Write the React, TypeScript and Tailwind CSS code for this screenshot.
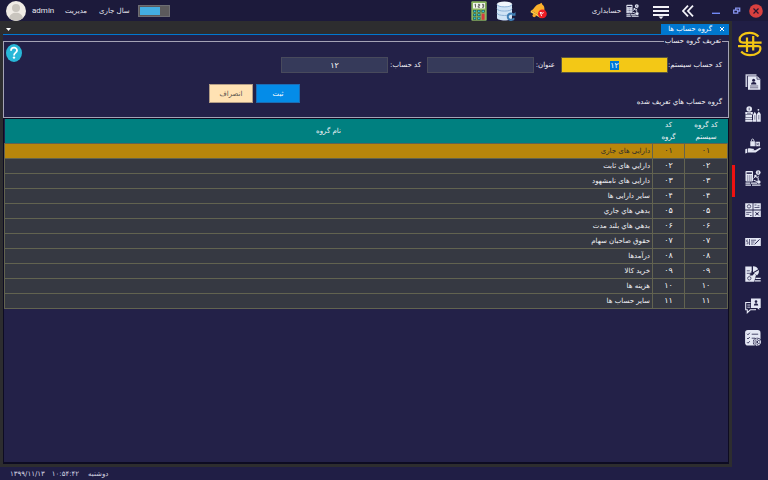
import { useEffect, useRef, type ReactNode } from "react";

const rows = [
  ["۰۱", "۰۱", "دارایی های جاری"],
  ["۰۲", "۰۲", "دارايي های ثابت"],
  ["۰۳", "۰۳", "دارایی های نامشهود"],
  ["۰۴", "۰۴", "سایر دارایی ها"],
  ["۰۵", "۰۵", "بدهي هاي جاري"],
  ["۰۶", "۰۶", "بدهي هاي بلند مدت"],
  ["۰۷", "۰۷", "حقوق صاحبان سهام"],
  ["۰۸", "۰۸", "درآمدها"],
  ["۰۹", "۰۹", "خرید کالا"],
  ["۱۰", "۱۰", "هزینه ها"],
  ["۱۱", "۱۱", "سایر حساب ها"],
];

const ink = "#211f47";

function Icon({ children, className = "h-4 w-4" }: { children: ReactNode; className?: string }) {
  return (
    <svg viewBox="0 0 16 16" className={className} fill="#e4e7f4" aria-hidden="true">
      {children}
    </svg>
  );
}

function AccountingShapes() {
  return (
    <>
      <rect x="0.5" y="1" width="7.5" height="10.5" rx="0.8" />
      <path d="M1.6 2.4h5.3v1.5H1.6z" fill={ink} />
      <path d="M2 6h4.8M2 8h4.8M2 10h4.8" stroke={ink} strokeWidth="0.7" strokeDasharray="1.1 0.7" />
      <circle cx="13.2" cy="2.6" r="2.4" />
      <path d="M13.2 1.4v2.4" stroke={ink} strokeWidth="0.7" />
      <path d="M8.5 8.5l2-2.2 1.8 1.4 1.4-2M13.2 7.5v3.2M8.5 10.2l4 1.5" fill="none" stroke="#e4e7f4" strokeWidth="1" />
      <circle cx="10.4" cy="6" r="1.2" />
      <circle cx="13.8" cy="12" r="1.8" />
      <path d="M0.5 12.6h4.8v1.2H.5zM0.5 14.6h5.5v1.1H.5zM6 12.6h6v1.2H6zM7 14.6h8.5v1.1H7z" />
    </>
  );
}

const menu: { name: string; shape: ReactNode }[] = [
  {
    name: "اشخاص",
    shape: (
      <>
        <path d="M0.5 0.3h11v1.4H2.2V13H0.5z" opacity="0.85" />
        <path d="M3 2.2h9.3l3 2.7v10.8H3z" />
        <path d="M12 2.5v2.7h3" fill="none" stroke={ink} strokeWidth="0.7" />
        <circle cx="8.6" cy="6.2" r="1.5" fill={ink} />
        <path d="M6 10.5c0-3.2 5.4-3.2 5.4 0z" fill={ink} />
        <path d="M5 12h8.2M5 13.8h8.2" stroke={ink} strokeWidth="0.6" />
      </>
    ),
  },
  {
    name: "خزانه",
    shape: (
      <>
        <circle cx="4.2" cy="3" r="2.8" />
        <path d="M0.3 6.1h7.5v2.3H.3zM0.5 9h6.5v2H.5zM0.3 11.6h6.7v1.8H.3zM0.3 14h7.3v1.8H.3z" />
        <path d="M4.2 1.7v2.6M2 7.2h4" stroke={ink} strokeWidth="0.7" />
        <path d="M8 15.8V8.8l1.8-3 1.7 3v7zM12 15.8V8l1.8-2.6L15.7 8v7.8z" />
        <circle cx="13.4" cy="3.8" r="0.9" />
        <path d="M9.8 9.2v4.5M13.8 9v4.5" stroke={ink} strokeWidth="0.5" />
      </>
    ),
  },
  {
    name: "فروش",
    shape: (
      <>
        <path d="M5.3 3.2h4.6v5H5.3zM10.5 3.8h4.4v4.4h-4.4z" />
        <path d="M6.4 3.2c0-3 2.5-3 2.5 0" fill="none" stroke="#e4e7f4" strokeWidth="0.9" />
        <path d="M11.2 5l2.8 2.2M14 5l-2.8 2.2" stroke={ink} strokeWidth="0.6" />
        <path d="M0.3 11.2l2-.8v4.4l-2 .8zM3 10.6c2-.9 3 .1 4.7.1 2 0 1.8 1.4 0 1.4H6.3l4 .1 4-2.3c1.4-.5 1.9.6.9 1.3l-4.5 3.3H3z" />
      </>
    ),
  },
  { name: "حسابداری", shape: <AccountingShapes /> },
  {
    name: "انبار",
    shape: (
      <>
        <path d="M0.2 1.2h7.4v6.4H.2zM8.4 1.2h7.4v6.4H8.4zM0.2 8.5h7.4v6.4H.2zM8.4 8.5h7.4v6.4H8.4z" />
        <circle cx="4" cy="4.4" r="1.7" fill="none" stroke={ink} strokeWidth="0.7" />
        <path d="M9.5 3h2M9.5 5.5h5M12.5 3.8h2M1.2 10.4h5.2M1.2 12.3h3M5 13.5h1.5" stroke={ink} strokeWidth="0.7" />
        <path d="M10 10l4.3 3.5M14.3 10L10 13.5" stroke={ink} strokeWidth="0.7" />
        <circle cx="12.1" cy="11.7" r="1" fill={ink} />
      </>
    ),
  },
  {
    name: "چک",
    shape: (
      <>
        <path d="M0.2 4h15.6v8H0.2z" />
        <path d="M4.5 5v6M6 6.2h5M6 8h3.5M6 10h2.5" stroke={ink} strokeWidth="0.7" />
        <path d="M3 6H1.7v1.8H3v2H1.5" fill="none" stroke={ink} strokeWidth="0.6" />
        <path d="M9.5 10.4l5-5" stroke={ink} strokeWidth="1" />
      </>
    ),
  },
  {
    name: "گزارش",
    shape: (
      <>
        <path d="M0.3 0.5h6.4v6L4.5 9.5h3l1.8-2 1.7 1.5-1.8 6.7H.3z" />
        <path d="M8 0.3a5.6 5.6 0 0 1 5.2 3L8 6.2z" />
        <path d="M14 4.1a5.6 5.6 0 0 1-2 5.3L8.8 7z" />
        <path d="M1.8 4.8h3M1.8 7.3h4M7.6 4.3L5 8.6" stroke={ink} strokeWidth="0.7" />
        <circle cx="4.3" cy="12.3" r="1.7" fill="none" stroke={ink} strokeWidth="0.7" />
        <path d="M10.5 11.8h5.2v1.3h-5.2zM9.8 14.3h5.9v1.3H9.8z" />
      </>
    ),
  },
  {
    name: "پیام",
    shape: (
      <>
        <path d="M6 0.5h9.7v9.5h-1.5l.2 2-2.3-2H6z" />
        <circle cx="11" cy="3.6" r="1.3" fill={ink} />
        <path d="M8.9 7.4c0-2.9 4.3-2.9 4.3 0z" fill={ink} />
        <path d="M5.5 4.5H.7v7.3h1.6v2.9l3-2.9h5V11" fill="none" stroke="#e4e7f4" strokeWidth="1.1" />
        <path d="M2.3 7h3M2.3 9.2h3" stroke="#e4e7f4" strokeWidth="0.9" />
      </>
    ),
  },
  {
    name: "تنظیمات",
    shape: (
      <>
        <rect x="0.1" y="0.1" width="15.4" height="15.4" rx="2.8" />
        <path d="M2 3.8l1 1 1.8-2M2 8l1 1 1.8-2M2 12.2l1 1 1.8-2M6.7 4.2h6.5M6.7 8.2h3.5" fill="none" stroke={ink} strokeWidth="0.8" />
        <circle cx="12.2" cy="12" r="4.3" fill={ink} />
        <circle cx="12.2" cy="12" r="3" fill="none" stroke="#e4e7f4" strokeWidth="1.5" strokeDasharray="1.6 0.5" />
        <circle cx="12.2" cy="12" r="1.5" fill="none" stroke="#e4e7f4" strokeWidth="1" />
      </>
    ),
  },
];

function Header() {
  return (
    <header className="flex h-[21px] shrink-0 items-center bg-[#1c1a3b] pr-[5px] pl-[6px] text-[#e6e6ee]">
      <svg viewBox="0 0 20 20" className="h-5 w-5" aria-hidden="true">
        <circle cx="10" cy="10" r="10" fill="#f0ece6" />
        <circle cx="10" cy="7" r="4" fill="#c9c5be" />
        <path d="M3.2 17.3c0-7.5 13.6-7.5 13.6 0A10 10 0 0 1 3.2 17.3z" fill="#c9c5be" />
      </svg>
      <span className="ml-[6px] w-[33px] font-['Roboto',sans-serif] text-[8px]">admin</span>
      <span dir="rtl" className="mr-3">مدیریت</span>
      <label htmlFor="year" dir="rtl" className="mr-2">سال جاری</label>
      <span className="relative flex h-3 w-8 border border-[#6d6d73] bg-[#5c5a5c]">
        <input id="year" type="checkbox" role="switch" defaultChecked className="absolute inset-0 appearance-none" />
        <span className="m-px w-5 bg-[#43aee3]" />
      </span>
      <div className="ml-auto flex items-center">
        <button aria-label="ماشین حساب">
          <svg viewBox="0 0 16 20" className="h-5 w-4">
            <rect x="0.3" y="0.3" width="15.4" height="19.4" rx="1" fill="#8ab55f" />
            <rect x="2" y="2" width="12" height="5.5" fill="#f1f4ec" />
            <path d="M3.5 3.8l1-.6v3.3M7 3.4h1.7v1.4H7.2v1.5h1.7M11 3.4h1.7v2.9H11M11.3 4.8h1.4" fill="none" stroke="#444" strokeWidth="0.8" />
            <path d="M2.2 9h3v2.6h-3zM6.4 9h3v2.6h-3zM10.6 9h3v2.6h-3zM2.2 12.6h3v2.6h-3zM6.4 12.6h3v2.6h-3zM2.2 16.2h3v2.6h-3zM6.4 16.2h3v2.6h-3z" fill="#17494a" />
            <path d="M2.8 9.4h1.8V11H2.8zM7 9.4h1.8V11H7zM11.2 9.4H13V11h-1.8zM2.8 13h1.8v1.6H2.8zM7 13h1.8v1.6H7zM2.8 16.6h1.8v1.6H2.8zM7 16.6h1.8v1.6H7z" fill="#35c5d3" />
            <rect x="10.6" y="12.6" width="3" height="6.2" fill="#d63a3f" />
          </svg>
        </button>
        <button aria-label="پشتیبان" className="ml-[9px]">
          <svg viewBox="0 0 20 20" className="h-5 w-5">
            <path d="M1 3v14c0 3.3 15 3.3 15 0V3z" fill="#cfe3f5" />
            <ellipse cx="8.5" cy="3" rx="7.5" ry="2.6" fill="#f1f7fd" />
            <path d="M1 3.4c0 3.3 15 3.3 15 0M1 7.6c0 3.3 15 3.3 15 0M1 12c0 3.3 15 3.3 15 0" fill="none" stroke="#86add3" strokeWidth="0.9" />
            <path d="M17.6 13.6a3.3 3.3 0 1 0 .4 3.6" fill="none" stroke="#3f7fb5" strokeWidth="2" />
            <path d="M15.6 14.8h3.9v-3.9z" fill="#3f7fb5" />
          </svg>
        </button>
        <button aria-label="اعلان ها" className="ml-[14px]">
          <svg viewBox="0 0 18 18" className="h-[18px] w-[18px]">
            <path d="M1 8.5C4.5 8 4.5 2.5 9.5 2l2-1.3.8 1.8c3.6 2.2 1.2 6 2.7 11.5l-3 1z" fill="#fbb12b" />
            <path d="M1 8.5l11 6.5-1 1.2-10.4-6z" fill="#ffd04a" />
            <circle cx="4.2" cy="13.5" r="1.7" fill="#f7a928" />
            <circle cx="12.4" cy="11.8" r="4.4" fill="#ed1c24" />
            <path d="M10.2 10.2c.2 1.5 1.3 1.5 1.5.2.2 1.3 1.4 1.3 1.8 0M10.3 10.1l1.3 4" fill="none" stroke="#fff" strokeWidth="0.9" />
          </svg>
        </button>
        <span dir="rtl" className="ml-11">حسابداری</span>
        <Icon className="ml-[5px] h-[13px] w-[13px]"><AccountingShapes /></Icon>
        <button aria-label="منو" className="ml-[14px]">
          <svg viewBox="0 0 16 13" className="mt-[3px] h-[13px] w-4" fill="#f2f2f8">
            <path d="M0 0h16v2H0zM0 4h16v2H0zM0 8h16v2H0zM5.5 10.5h5L8 13z" />
          </svg>
        </button>
        <button aria-label="بازگشت" className="ml-[13px]">
          <svg viewBox="0 0 12 12" className="h-3 w-3" fill="none" stroke="#f2f2f8" strokeWidth="1.8">
            <path d="M6 .7L1 6l5 5.3M11 .7L6 6l5 5.3" />
          </svg>
        </button>
        <button aria-label="کوچک کردن" className="ml-[18px]">
          <svg viewBox="0 0 8 8" className="h-2 w-2"><path d="M0 5.6h8V7H0z" fill="#7189f5" /></svg>
        </button>
        <button aria-label="بازگردانی" className="ml-[13px]">
          <svg viewBox="0 0 8 8" className="h-2 w-2" fill="none" stroke="#8794ee" strokeWidth="1.3">
            <path d="M.7 3.2h4v3h-4zM2.7 3V1.2h4v3H5" />
          </svg>
        </button>
        <button aria-label="بستن" className="ml-2">
          <svg viewBox="0 0 14 14" className="h-[14px] w-[14px]">
            <circle cx="7" cy="7" r="6.8" fill="#d9403f" />
            <path d="M4.5 4.5l5 5M9.5 4.5l-5 5" stroke="#2a1530" strokeWidth="1.2" />
          </svg>
        </button>
      </div>
    </header>
  );
}

function Sidebar() {
  return (
    <nav className="flex w-9 shrink-0 flex-col bg-[#201e45] pt-[10px]">
      <svg viewBox="0 0 26 26" className="mb-[9px] ml-[5px] h-[26px] w-[26px]" fill="none" stroke="#f3c614" strokeWidth="2.2" aria-hidden="true">
        <path d="M21.5 5.5C18.8 2.6 15.8 1.8 12.5 1.8 6.5 1.8 2.6 5 2.6 8.6c0 2.2 1.5 3 3.4 3H24.6" />
        <path d="M4.2 20.5c2.6 2.9 5.8 3.7 8.8 3.7 6.5 0 10.4-3.2 10.4-6.8 0-1.8-.8-2.2-2.4-2.2H1" />
        <path d="M10 21V6.5M16.2 19.5V5" />
      </svg>
      {menu.map((m) => (
        <button key={m.name} aria-label={m.name} className="relative flex h-8 items-center justify-center pl-[6px]">
          {m.name === "حسابداری" && <span className="absolute top-[3px] left-0 h-8 w-[3px] bg-[#ee1111]" />}
          <Icon>{m.shape}</Icon>
        </button>
      ))}
    </nav>
  );
}

const field = "h-4 w-[107px] border border-[#484a5c] bg-[#363a5a] text-center text-[8px] text-white outline-none";

function GroupForm() {
  const code = useRef<HTMLInputElement>(null);
  useEffect(() => {
    code.current?.focus();
    code.current?.select();
  }, []);
  return (
    <form onSubmit={(e) => e.preventDefault()}>
      <fieldset className="relative border border-[#a4a3b5] px-[6px] pb-[9px]">
        <legend className="h-3 px-px leading-3">تعریف گروه حساب</legend>
        <div className="mt-[10px] flex items-center">
          <label htmlFor="sys" className="w-[54px] whitespace-nowrap">کد حساب سیستم:</label>
          <input
            id="sys"
            ref={code}
            defaultValue="۱۲"
            className="h-4 w-[107px] border border-[#5a5740] bg-[#f3c816] text-center text-[8px] text-[#222] outline-none selection:bg-[#0078d7] selection:text-white"
          />
          <label htmlFor="title" className="mr-[6px] w-[21px] whitespace-nowrap">عنوان:</label>
          <input id="title" className={field} />
          <label htmlFor="acc" className="mr-[6px] w-[33px] whitespace-nowrap">کد حساب:</label>
          <input id="acc" defaultValue="۱۲" className={field} />
        </div>
        <div className="mt-[11px] flex items-start">
          <p className="mt-3 w-[422px]">گروه حساب هاي تعریف شده</p>
          <button type="submit" className="h-[19px] w-11 border border-[#1c6cb4] bg-[#048ce8] text-white">ثبت</button>
          <button type="button" className="mr-[3px] h-[19px] w-11 border border-[#b39d85] bg-[#ffe2b3] text-[#55524c]">انصراف</button>
        </div>
        <button type="button" aria-label="راهنما" className="absolute top-[-3px] left-[2px]">
          <svg viewBox="0 0 16 18" className="h-[18px] w-4">
            <ellipse cx="8" cy="9" rx="8" ry="9" fill="#28b7d8" />
            <path d="M5 6.7c0-4 6-4 6-.3 0 2.3-3 2.2-3 5" fill="none" stroke="#fff" strokeWidth="1.8" />
            <circle cx="8" cy="13.6" r="1.2" fill="#fff" />
          </svg>
        </button>
      </fieldset>
    </form>
  );
}

function GroupTable() {
  const cell = "border border-[#626350] p-0";
  return (
    <table className="w-full table-fixed border-collapse">
      <colgroup>
        <col className="w-[43px]" />
        <col className="w-8" />
        <col />
      </colgroup>
      <thead>
        <tr className="h-6 bg-[#008080] leading-3">
          <th className="px-1 font-normal">کد گروه سیستم</th>
          <th className="px-2 font-normal">کد گروه</th>
          <th className="font-normal">نام گروه</th>
        </tr>
      </thead>
      <tbody>
        {rows.map(([sys, group, name], i) => (
          <tr key={sys} className={i === 0 ? "h-[15px] bg-[#b8860b] text-[#2b2b2b]" : "h-[15px] bg-[#363942]"}>
            <td className={`${cell} text-center text-[8px]`}>{sys}</td>
            <td className={`${cell} text-center text-[8px]`}>{group}</td>
            <td className={`${cell} pr-[2px]`}>{name}</td>
          </tr>
        ))}
      </tbody>
    </table>
  );
}

export default function App() {
  return (
    <div className="flex h-screen flex-col overflow-hidden bg-[#201e45] font-['DejaVu_Sans',sans-serif] text-[7px] leading-[12px] text-[#f4f4f8]">
      <Header />
      <div className="flex min-h-0 flex-1">
        <div className="flex min-w-0 flex-1 flex-col">
          <main className="flex min-h-0 flex-1 flex-col bg-[#2d2d2f] p-[3px]">
            <div dir="rtl" className="flex h-[11px] shrink-0 items-center justify-between border-b border-[#0078d0]">
              <div className="flex h-[11px] w-[68px] items-center gap-[7px] bg-[#0078d0] pr-1 text-white">
                <button aria-label="بستن زبانه">
                  <svg viewBox="0 0 6 6" className="h-[6px] w-[6px]" stroke="#fff"><path d="M1 1l4 4M5 1L1 5" /></svg>
                </button>
                <span className="whitespace-nowrap">گروه حساب ها</span>
              </div>
              <button aria-label="زبانه ها" className="ml-[3px]">
                <svg viewBox="0 0 5 3" className="h-[3px] w-[5px]"><path d="M0 0h5L2.5 3z" fill="#fff" /></svg>
              </button>
            </div>
            <section dir="rtl" className="flex min-h-0 flex-1 flex-col border-b border-[#0d0b22] bg-[#232148]">
              <GroupForm />
              <div className="flex-1 border border-[#0d0b22]">
                <GroupTable />
              </div>
            </section>
          </main>
          <footer className="flex h-[13px] shrink-0 items-center gap-[7px] pl-[10px] text-[#d5d5e2]">
            <span>۱۳۹۹/۱۱/۱۳</span>
            <span>۱۰:۵۴:۴۲</span>
            <span dir="rtl" className="ml-[2px]">دوشنبه</span>
          </footer>
        </div>
        <Sidebar />
      </div>
    </div>
  );
}
